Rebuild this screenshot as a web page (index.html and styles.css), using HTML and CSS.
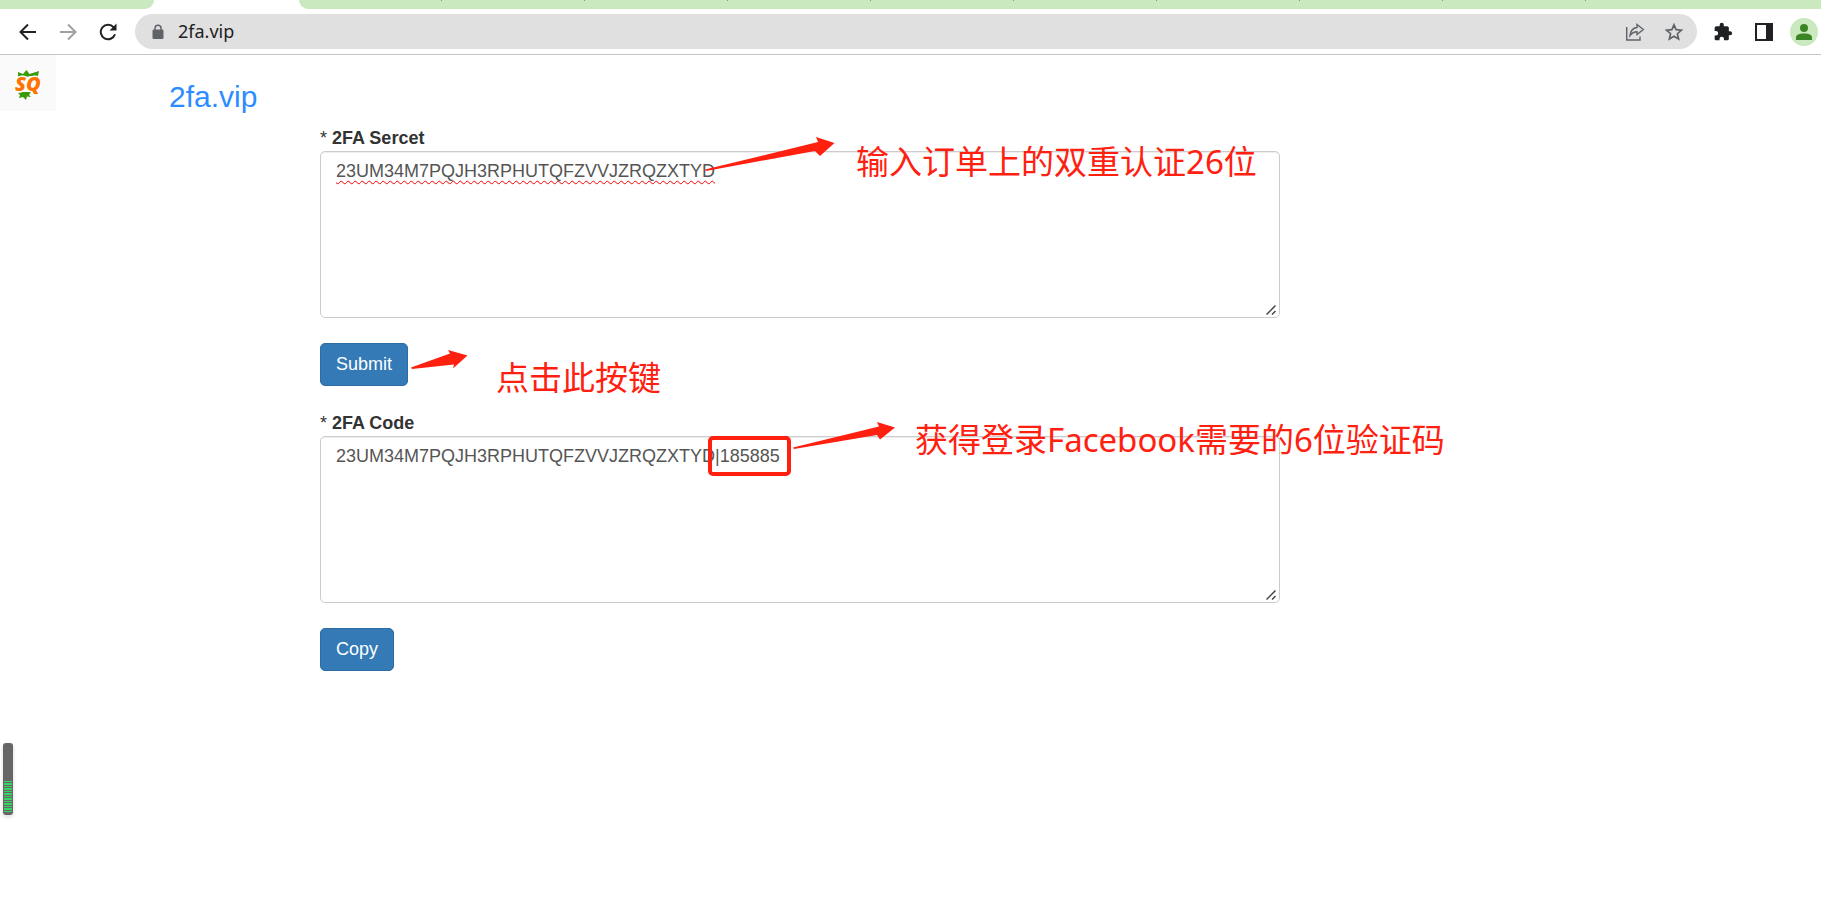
FILE: index.html
```html
<!DOCTYPE html>
<html lang="zh-CN">
<head>
<meta charset="utf-8">
<title>2fa.vip</title>
<link rel="stylesheet" href="styles.css">
</head>
<body>
<div class="tabstrip">
  <div class="tabs-left"></div>
  <div class="tabs-right"><i></i><i></i><i></i><i></i><i></i><i></i><i></i><i></i><i></i></div>
</div>
<header class="toolbar">
  <nav class="nav-buttons">
    <button class="icon-btn" aria-label="Back"><svg width="18" height="18" viewBox="0 0 18 18" fill="none" stroke="#202124" stroke-width="2"><path d="M17 9H2M9 1.500L1.500 9L9 16.500"/></svg></button>
    <button class="icon-btn" aria-label="Forward"><svg width="18" height="18" viewBox="0 0 18 18" fill="none" stroke="#a0a1a3" stroke-width="2"><path d="M1 9H16M9 1.500L16.500 9L9 16.500"/></svg></button>
    <button class="icon-btn" aria-label="Reload"><svg width="18" height="18" viewBox="0 0 18 18"><path d="M14.700 4.300A7.300 7.300 0 1 0 16 11.200" fill="none" stroke="#202124" stroke-width="2"/><path d="M17.500 .5V7.500H10.500z" fill="#202124"/></svg></button>
  </nav>
  <div class="omnibox">
    <svg class="lock" width="12" height="16" viewBox="0 0 12 16"><path d="M3 7V4.300a3 3 0 0 1 6 0V7" fill="none" stroke="#5f6368" stroke-width="1.500"/><rect x=".5" y="5.500" width="11" height="9.500" rx="1.200" fill="#5f6368"/></svg>
    <input class="url" type="text" value="2fa.vip" aria-label="Address" spellcheck="false">
    <button class="icon-btn" aria-label="Share"><svg width="20" height="18" viewBox="0 0 20 18" fill="none" stroke="#5f6368" stroke-width="1.400"><path d="M1.700 4V17H15V13.500"/><path d="M12 1.500L18.300 6.500L12 11.500V8.700C9 8.700 7 9.800 5 12.500C5.500 8 8 5 12 4.500z"/></svg></button>
    <button class="icon-btn" aria-label="Bookmark"><svg width="18" height="18" viewBox="0 0 18 18" fill="none" stroke="#5f6368" stroke-width="1.700"><path d="M9 1.800L11.100 6.700L16.500 7.200L12.400 10.700L13.600 15.900L9 13.200L4.400 15.900L5.600 10.700L1.500 7.200L6.900 6.700z"/></svg></button>
  </div>
  <div class="tools">
    <button class="icon-btn" aria-label="Extensions"><svg width="20" height="20" viewBox="0 0 24 24" fill="#202124"><path d="M20.500 11H19V7c0-1.100-.9-2-2-2h-4V3.500a2.500 2.500 0 0 0-5 0V5H4c-1.100 0-2 .9-2 2v3.800h1.500a2.700 2.700 0 0 1 0 5.400H2V20c0 1.100.9 2 2 2h3.800v-1.500a2.700 2.700 0 0 1 5.400 0V22H17c1.100 0 2-.9 2-2v-4h1.500a2.500 2.500 0 0 0 0-5z"/></svg></button>
    <button class="icon-btn" aria-label="Side panel"><svg width="18" height="18" viewBox="0 0 18 18"><path d="M0 0H18V18H0zM2 2V16H11V2z" fill="#202124" fill-rule="evenodd"/></svg></button>
    <button class="icon-btn avatar" aria-label="Profile"><svg width="16" height="16" viewBox="0 0 16 16" fill="#3c8527"><circle cx="8" cy="4" r="4"/><path d="M0 16V13.500C0 10.800 3 9.500 8 9.500S16 10.800 16 13.500V16z"/></svg></button>
  </div>
</header>

<div class="page">
  <div class="masthead">
    <a class="logo" href="#" aria-label="SQ"><svg width="56" height="56" viewBox="0 0 56 56"><path d="M18 17L23 19L26.500 15L29.500 19L39 16L37.500 23L30 21L23 23L18 22zM18 38L22 37L31 37L29 40L31 42L27 41.500L26 45L23 42L19 43L20 40z" fill="#3a9a0a"/><text class="logo-text" x="15" y="36">SQ</text></svg></a>
    <a class="brand" href="#">2fa.vip</a>
  </div>
  <main class="content">
    <form class="field">
      <label for="secret"><span class="required">*</span> 2FA Sercet</label>
      <div class="box-wrap">
        <textarea id="secret" class="box misspelt" rows="6" spellcheck="false">23UM34M7PQJH3RPHUTQFZVVJZRQZXTYD</textarea>
        <svg class="grip" width="10" height="10" viewBox="0 0 10 10"><path d="M.5 9.500L9.500 .5M6 9.500L9.500 6"/></svg>
      </div>
      <button class="btn" type="button">Submit</button>
    </form>
    <form class="field">
      <label for="code"><span class="required">*</span> 2FA Code</label>
      <div class="box-wrap">
        <textarea id="code" class="box" rows="6" spellcheck="false">23UM34M7PQJH3RPHUTQFZVVJZRQZXTYD|185885</textarea>
        <svg class="grip" width="10" height="10" viewBox="0 0 10 10"><path d="M.5 9.500L9.500 .5M6 9.500L9.500 6"/></svg>
      </div>
      <button class="btn" type="button">Copy</button>
    </form>
  </main>

  <svg class="arrow arrow-secret" width="130" height="34" viewBox="0 0 130 34"><path d="M0 32.500L113 5L111 0L129.500 6L115 19L110 14L1 34z"/></svg>
  <p class="note note-secret">输入订单上的双重认证26位</p>
  <svg class="arrow arrow-submit" width="57" height="20" viewBox="0 0 57 20"><path d="M0 17.500L39 3.500L37 0L56.500 5.500L42 18.500L43 14.500L1 19z"/></svg>
  <p class="note note-submit">点击此按键</p>
  <svg class="arrow arrow-code" width="103" height="28" viewBox="0 0 103 28"><path d="M0 25.500L86 4.500L84 0L102 5.500L87 17.500L84 13L1 27z"/></svg>
  <p class="note note-code">获得登录Facebook需要的6位验证码</p>
  <div class="code-frame"></div>
  <div class="gauge"><div class="gauge-level"></div></div>
</div>
</body>
</html>
```

FILE: styles.css
```css
* { box-sizing: border-box; }

body {
  display: flex;
  flex-direction: column;
  min-height: 100vh;
  margin: 0;
  background: #fff;
  color: #333;
  font: 18px/25px "Liberation Sans", Arial, sans-serif;
}

button, input, textarea { font: inherit; }

/* browser frame */
.tabstrip {
  display: flex;
  gap: 145px;
  height: 9px;
}

.tabs-left {
  width: 154px;
  background: #cbe9bf;
  border-bottom-right-radius: 9px;
}

.tabs-right {
  flex: 1;
  display: flex;
  background: #cbe9bf;
  border-bottom-left-radius: 9px;
}

.tabs-right i {
  width: 143px;
  height: 1px;
  border-right: 1px solid #7f9a76;
}

.toolbar {
  display: flex;
  align-items: center;
  height: 46px;
  padding: 0 3px 0 19px;
  border-bottom: 1px solid #c6c6c6;
}

.nav-buttons {
  display: flex;
  gap: 22px;
  margin-right: 18px;
}

.icon-btn {
  display: flex;
  padding: 0;
  border: 0;
  background: none;
}

.omnibox {
  flex: 1;
  display: flex;
  align-items: center;
  gap: 20px;
  height: 35px;
  padding: 0 14px 0 17px;
  border-radius: 18px;
  background: #e0e0e0;
}

.url {
  flex: 1;
  min-width: 0;
  margin-left: -6px;
  padding: 0;
  border: 0;
  outline: 0;
  background: none;
  color: #202124;
  font: 18px/25px "Noto Sans", sans-serif;
}

.tools {
  display: flex;
  align-items: center;
  gap: 22px;
  margin-left: 16px;
}

.avatar {
  align-items: center;
  justify-content: center;
  width: 28px;
  height: 28px;
  margin-left: -5px;
  border-radius: 50%;
  background: #cbe9bf;
}

/* page */
.page {
  position: relative;
  flex: 1;
}

.masthead {
  display: flex;
  height: 71px;
}

.logo {
  width: 56px;
  height: 56px;
  background: #fafafa;
}

.logo-text {
  fill: #ff7300;
  stroke: #fff;
  stroke-width: 3px;
  paint-order: stroke;
  font: italic 900 20px "Noto Sans", sans-serif;
}

.brand {
  margin: 23px 0 0 113px;
  color: #2d8cff;
  font-size: 30px;
  line-height: 38px;
  text-decoration: none;
}

.content {
  display: flex;
  flex-direction: column;
  gap: 25px;
  max-width: 1280px;
  padding-left: 320px;
}

.field {
  display: flex;
  flex-direction: column;
  align-items: flex-start;
}

.field label { font-weight: bold; }

.required { font-weight: normal; }

.box-wrap {
  position: relative;
  width: 100%;
  margin-bottom: 25px;
}

.box {
  display: block;
  width: 100%;
  padding: 7px 15px 8px;
  border: 1px solid #ccc;
  border-radius: 5px;
  outline: 0;
  background: #fff;
  box-shadow: inset 0 1px 1px rgba(0, 0, 0, .075);
  color: #555;
}

.box::-webkit-resizer { background: transparent; }

.grip {
  position: absolute;
  right: 4px;
  bottom: 3px;
  fill: none;
  stroke: #444;
  stroke-width: 1.5px;
  pointer-events: none;
}

.misspelt {
  text-decoration: underline wavy #f00 1px;
  text-underline-offset: 3px;
  text-decoration-skip-ink: none;
}

.btn {
  padding: 8px 15px;
  border: 1px solid #2e6da4;
  border-radius: 5px;
  background: #337ab7;
  color: #fff;
}

/* annotations drawn over the page */
.note {
  position: absolute;
  margin: 0;
  color: #ff2010;
  font: 33px/44px "Noto Sans", "Noto Sans CJK SC", sans-serif;
  white-space: nowrap;
}

.note-secret { left: 856px; top: 85px; }
.note-submit { left: 496px; top: 301px; }
.note-code { left: 915px; top: 363px; }

.arrow {
  position: absolute;
  fill: #ff2010;
}

.arrow-secret { left: 705px; top: 82px; }
.arrow-submit { left: 411px; top: 295px; }
.arrow-code { left: 793px; top: 367px; }

.code-frame {
  position: absolute;
  left: 708px;
  top: 381px;
  width: 83px;
  height: 40px;
  border: 4px solid #ff2010;
  border-radius: 5px;
}

.gauge {
  position: absolute;
  left: 3px;
  top: 688px;
  display: flex;
  align-items: flex-end;
  width: 10px;
  height: 72px;
  padding: 1px 1px 3px;
  border-radius: 3px;
  background: #666;
  box-shadow: 0 2px 4px rgba(0, 0, 0, .15);
}

.gauge-level {
  flex: 1;
  height: 31px;
  background: repeating-linear-gradient(#36d564 0 1px, #666 1px 2px, #36d564 2px 4px, #666 4px 5px);
}
```
